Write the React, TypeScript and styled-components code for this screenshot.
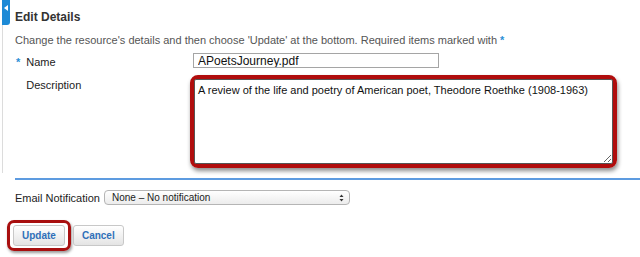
import React from 'react';
import styled, { createGlobalStyle } from 'styled-components';

const GlobalStyle = createGlobalStyle`
  html, body {
    margin: 0;
    padding: 0;
    background: #ffffff;
  }
  body {
    font-family: 'Liberation Sans', Arial, sans-serif;
    width: 640px;
    height: 257px;
    overflow: hidden;
  }
`;

const App: React.FC = () => {
  return (
    <Page>
      <GlobalStyle />
      <Sidebar>
        <SideTab>
          <svg width="4" height="6" viewBox="0 0 4 6">
            <path d="M4 0 L0 3 L4 6 Z" fill="#ffffff" />
          </svg>
        </SideTab>
        <SideLine />
      </Sidebar>
      <Main>
        <Title>Edit Details</Title>
        <Intro>
          Change the resource's details and then choose 'Update' at the bottom. Required items marked
          with <Star>*</Star>
        </Intro>
        <FormGrid>
          <Label>
            <Star>*</Star>
            <span>Name</span>
          </Label>
          <NameInput defaultValue="APoetsJourney.pdf" />
          <Label $top>
            <Star $hidden>*</Star>
            <span>Description</span>
          </Label>
          <Highlight>
            <DescArea
              defaultValue="A review of the life and poetry of American poet, Theodore Roethke (1908-1963)"
            />
          </Highlight>
        </FormGrid>
        <Divider />
        <EmailRow>
          <EmailLabel>Email Notification</EmailLabel>
          <SelectBox>
            <span>None – No notification</span>
            <svg width="5" height="8" viewBox="0 0 5 8">
              <path d="M0.5 3 L2.5 0.5 L4.5 3 Z" fill="#333" />
              <path d="M0.5 5 L2.5 7.5 L4.5 5 Z" fill="#333" />
            </svg>
          </SelectBox>
        </EmailRow>
        <ButtonRow>
          <ButtonHighlight>
            <Button>Update</Button>
          </ButtonHighlight>
          <Button>Cancel</Button>
        </ButtonRow>
      </Main>
    </Page>
  );
};

export default App;

const Page = styled.div`
  display: flex;
  width: 640px;
  height: 257px;
  overflow: hidden;
`;

const Sidebar = styled.div`
  width: 11px;
  flex-shrink: 0;
  display: flex;
  flex-direction: column;
  padding-left: 2px;
  box-sizing: border-box;
`;

const SideTab = styled.div`
  width: 8px;
  height: 25px;
  background: #1d8ad6;
  border-bottom-right-radius: 3px;
  display: flex;
  justify-content: center;
  padding-top: 5px;
  box-sizing: border-box;
`;

const SideLine = styled.div`
  width: 1px;
  height: 148px;
  background: #dcdcdc;
`;

const Main = styled.div`
  flex: 1;
  padding: 10px 0 0 4px;
  display: flex;
  flex-direction: column;
`;

const Title = styled.h2`
  margin: 0;
  font-size: 12px;
  font-weight: bold;
  color: #333333;
  line-height: 15px;
`;

const Intro = styled.p`
  margin: 8px 0 0 0;
  font-size: 11px;
  color: #555555;
  line-height: 14px;
  white-space: nowrap;
`;

const Star = styled.span<{ $hidden?: boolean }>`
  color: #2b8fd6;
  font-weight: bold;
  visibility: ${(p) => (p.$hidden ? 'hidden' : 'visible')};
`;

const FormGrid = styled.div`
  display: grid;
  grid-template-columns: 175px 427px;
  row-gap: 7px;
  margin-top: 6px;
  align-items: start;
`;

const Label = styled.div<{ $top?: boolean }>`
  display: flex;
  gap: 6px;
  font-size: 11px;
  color: #222222;
  padding-left: 1px;
  padding-top: ${(p) => (p.$top ? '4px' : '3px')};
`;

const NameInput = styled.input`
  margin-left: 3px;
  width: 246px;
  height: 15px;
  box-sizing: border-box;
  border: 1px solid #a5a5a5;
  padding: 0 4px;
  font-family: 'Liberation Sans', Arial, sans-serif;
  font-size: 12px;
  color: #111111;
  outline: none;
`;

const Highlight = styled.div`
  width: 427px;
  height: 93px;
  box-sizing: border-box;
  border: 4px solid #b00d0d;
  border-radius: 8px;
  box-shadow: 1px 3px 4px rgba(0, 0, 0, 0.45);
  display: flex;
`;

const DescArea = styled.textarea`
  flex: 1;
  border: 1px solid #555555;
  border-radius: 2px;
  padding: 4px 3px;
  font-family: 'Liberation Sans', Arial, sans-serif;
  font-size: 11px;
  color: #111111;
  resize: both;
  outline: none;
`;

const Divider = styled.div`
  margin-top: 10px;
  height: 2px;
  background: #5d9be0;
`;

const EmailRow = styled.div`
  display: flex;
  align-items: center;
  gap: 4px;
  margin-top: 10px;
`;

const EmailLabel = styled.span`
  font-size: 11px;
  color: #222222;
`;

const SelectBox = styled.div`
  width: 246px;
  height: 15px;
  box-sizing: border-box;
  border: 1px solid #b5b5b5;
  border-radius: 4px;
  background: linear-gradient(#ffffff, #ececec);
  display: flex;
  align-items: center;
  justify-content: space-between;
  padding: 0 5px 0 7px;
  font-size: 10px;
  font-weight: 500;
  color: #222222;
`;

const ButtonRow = styled.div`
  display: flex;
  align-items: center;
  gap: 2px;
  margin-top: 15px;
  margin-left: -8px;
`;

const ButtonHighlight = styled.div`
  border: 3px solid #a80f0f;
  border-radius: 7px;
  padding: 2px 3px;
  box-shadow: 1px 2px 3px rgba(0, 0, 0, 0.4);
  display: flex;
`;

const Button = styled.button`
  height: 21px;
  padding: 0 8px;
  border: 1px solid #c8c8c8;
  border-radius: 3px;
  background: linear-gradient(#ffffff, #e4e4e4);
  font-family: 'Liberation Sans', Arial, sans-serif;
  font-size: 10px;
  font-weight: bold;
  color: #2f70b9;
  cursor: pointer;
`;
